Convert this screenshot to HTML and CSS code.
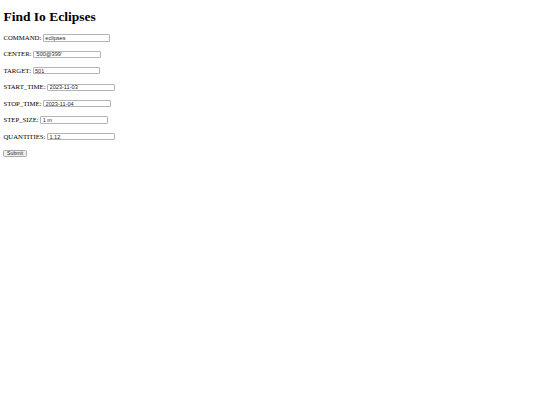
FILE: index.html
```html
<!DOCTYPE html>
<html>
<head>
<meta charset="utf-8">
<title>Find Io Eclipses</title>
<link rel="stylesheet" href="styles.css">
</head>
<body>
<h1 class="title">Find Io Eclipses</h1>
<form class="query">
<p class="field"><label for="command">COMMAND:</label><input class="box" type="text" id="command" name="COMMAND" value="eclipses"></p>
<p class="field"><label for="center">CENTER:</label><input class="box" type="text" id="center" name="CENTER" value="'500@399'"></p>
<p class="field"><label for="target">TARGET:</label><input class="box" type="text" id="target" name="TARGET" value="501"></p>
<p class="field"><label for="start">START_TIME:</label><input class="box" type="text" id="start" name="START_TIME" value="2023-11-03"></p>
<p class="field"><label for="stop">STOP_TIME:</label><input class="box" type="text" id="stop" name="STOP_TIME" value="2023-11-04"></p>
<p class="field"><label for="step">STEP_SIZE:</label><input class="box" type="text" id="step" name="STEP_SIZE" value="1 m"></p>
<p class="field"><label for="qty">QUANTITIES:</label><input class="box" type="text" id="qty" name="QUANTITIES" value="1,12"></p>
<div class="actions"><input class="submit" type="submit" value="Submit"></div>
</form>
</body>
</html>
```
FILE: styles.css
```css
html {
  background: #ffffff;
}
body {
  margin: 3.4px;
  font-family: "Liberation Serif", "Times New Roman", serif;
  font-size: 6.75px;
  color: #000000;
}
.title {
  font-size: 13.5px;
  font-weight: bold;
  line-height: 15.5px;
  margin: 5.6px 0 8.6px;
}
.query {
  margin: 0;
}
.field {
  display: flex;
  align-items: center;
  gap: 1.7px;
  height: 9.7px;
  margin: 6.75px 0;
  line-height: 7.8px;
}
.box {
  box-sizing: border-box;
  width: 67.5px;
  height: 7.4px;
  padding: 0 1.3px;
  border: 1px solid #b4b4b4;
  border-radius: 1px;
  font-family: "Liberation Sans", Arial, sans-serif;
  font-size: 5.6px;
  line-height: 5.4px;
  color: #2a2a2a;
  background: #ffffff;
  outline: none;
}
.actions {
  padding-top: 2px;
}
.submit {
  box-sizing: border-box;
  display: block;
  width: 23.5px;
  height: 7px;
  padding: 0;
  border: 1px solid #a8a8a8;
  border-radius: 1.5px;
  background: #efefef;
  font-family: "Liberation Sans", Arial, sans-serif;
  font-size: 5.2px;
  line-height: 5px;
  color: #2a2a2a;
}
```
